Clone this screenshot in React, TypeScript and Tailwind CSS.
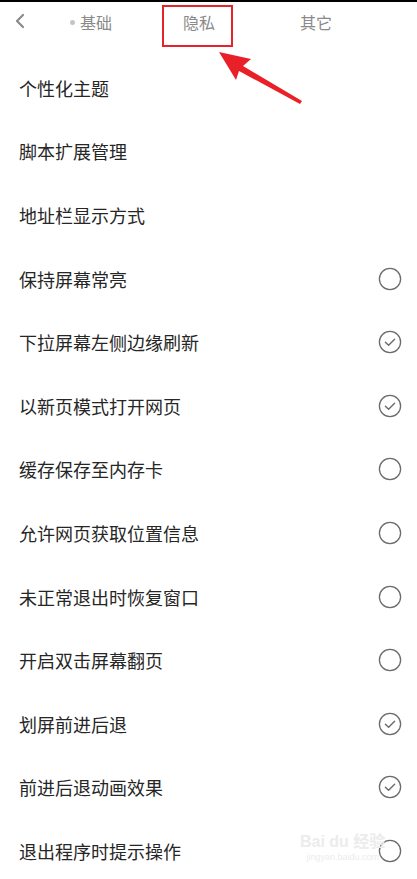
import React from "react";

const rows: { label: string; state?: "on" | "off" }[] = [
  { label: "个性化主题" },
  { label: "脚本扩展管理" },
  { label: "地址栏显示方式" },
  { label: "保持屏幕常亮", state: "off" },
  { label: "下拉屏幕左侧边缘刷新", state: "on" },
  { label: "以新页模式打开网页", state: "on" },
  { label: "缓存保存至内存卡", state: "off" },
  { label: "允许网页获取位置信息", state: "off" },
  { label: "未正常退出时恢复窗口", state: "off" },
  { label: "开启双击屏幕翻页", state: "off" },
  { label: "划屏前进后退", state: "on" },
  { label: "前进后退动画效果", state: "on" },
  { label: "退出程序时提示操作", state: "off" },
];

const Check = ({ on }: { on: boolean }) => (
  <svg width="24" height="24" viewBox="0 0 24 24" fill="none">
    <circle cx="12" cy="12" r="10.6" stroke="#6b6b6b" strokeWidth="1.3" />
    {on && (
      <path d="M7.4 12.2l3.2 3.1 6-6" stroke="#6b6b6b" strokeWidth="1.4" strokeLinecap="round" strokeLinejoin="round" />
    )}
  </svg>
);

export default function App() {
  return (
    <div
      className="relative w-[417px] h-[879px] overflow-hidden bg-white"
      style={{ fontFamily: '"Noto Sans CJK SC", "Noto Sans", sans-serif' }}
    >
      <div className="h-[2px] bg-black" />
      {/* Tabs header */}
      <div className="relative h-[54px] flex items-start">
        <div className="w-[40px] pl-[14px] pt-[11px]">
          <svg width="12" height="16" viewBox="0 0 12 16" fill="none">
            <path d="M9 2L3 8l6 6" stroke="#8a8a8a" strokeWidth="2.2" strokeLinecap="round" strokeLinejoin="round" />
          </svg>
        </div>
        <div className="flex items-center pt-[8px] text-[16px] text-[#8a8a8a]">
          <div className="flex items-center w-[80px] ml-[30px]">
            <span className="w-[5px] h-[5px] rounded-full bg-[#c4c4c4] mr-[5px]" />
            <span>基础</span>
          </div>
          <span className="ml-[33px]">隐私</span>
          <span className="ml-[85px]">其它</span>
        </div>
        <div className="absolute left-[162px] top-[3px] w-[71px] h-[42px] border-2 border-[#e5232a]" />
      </div>

      {/* Annotation arrow */}
      <svg className="absolute left-0 top-0" width="417" height="120" viewBox="0 0 417 120">
        <path d="M219 52 L251 59 L243 66 L302 101 L300 104 L239 71 L236 80 Z" fill="#ea2029" />
      </svg>

      <div className="flex flex-col">
        {rows.map((r) => (
          <div key={r.label} className="h-[63.6px] flex items-center justify-between pl-[19px] pr-[15px]">
            <span className="text-[18px] text-[#262626] leading-none">{r.label}</span>
            {r.state && <Check on={r.state === "on"} />}
          </div>
        ))}
      </div>

      {/* watermark */}
      <div className="absolute left-[300px] top-[834px] flex flex-col items-center text-[#ececec] leading-none pointer-events-none">
        <span className="text-[16px] font-bold" style={{ fontFamily: '"Liberation Sans", "Noto Sans CJK SC", sans-serif' }}>
          Bai du 经验
        </span>
        <span className="text-[9px] mt-[3px]" style={{ fontFamily: '"Liberation Sans", sans-serif' }}>
          jingyan.baidu.com
        </span>
      </div>
    </div>
  );
}
